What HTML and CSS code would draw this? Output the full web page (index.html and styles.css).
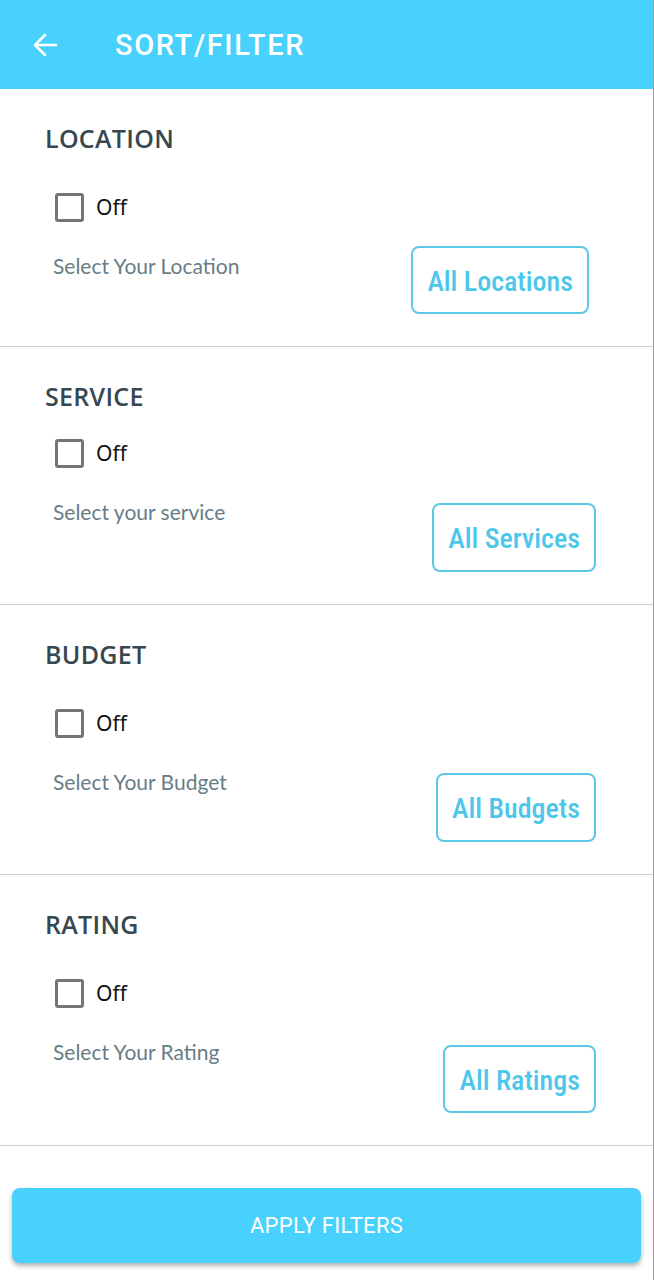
FILE: index.html
```html
<!DOCTYPE html>
<html>
<head>
<meta charset="utf-8">
<link rel="stylesheet" href="styles.css">
</head>
<body>
<div class="page">
  <header class="appbar">
    <svg class="back" width="26" height="26" viewBox="0 0 26 26"><path d="M24 13H3M13 3L3 13l10 10" fill="none" stroke="#fff" stroke-width="2.6" stroke-linecap="round" stroke-linejoin="round"/></svg>
    <h1 class="title">SORT/FILTER</h1>
  </header>

  <section class="filter filter--first">
    <h2 class="filter-title">LOCATION</h2>
    <label class="check"><span class="box"></span><span class="check-label">Off</span></label>
    <div class="select-row">
      <span class="select-text">Select Your Location</span>
      <button class="pick">All Locations</button>
    </div>
  </section>

  <section class="filter filter--tight">
    <h2 class="filter-title">SERVICE</h2>
    <label class="check"><span class="box"></span><span class="check-label">Off</span></label>
    <div class="select-row">
      <span class="select-text">Select your service</span>
      <button class="pick">All Services</button>
    </div>
  </section>

  <section class="filter">
    <h2 class="filter-title">BUDGET</h2>
    <label class="check"><span class="box"></span><span class="check-label">Off</span></label>
    <div class="select-row">
      <span class="select-text">Select Your Budget</span>
      <button class="pick">All Budgets</button>
    </div>
  </section>

  <section class="filter filter--last">
    <h2 class="filter-title">RATING</h2>
    <label class="check"><span class="box"></span><span class="check-label">Off</span></label>
    <div class="select-row">
      <span class="select-text">Select Your Rating</span>
      <button class="pick">All Ratings</button>
    </div>
  </section>

  <div class="apply-wrap">
    <button class="apply">APPLY FILTERS</button>
  </div>
</div>
</body>
</html>
```
FILE: styles.css
```css
* { box-sizing: border-box; }
html, body { margin: 0; padding: 0; background: #fff; }
.page {
  width: 654px;
  height: 1280px;
  border-right: 1px solid #9a9a9a;
  display: flex;
  flex-direction: column;
}
.appbar {
  height: 89px;
  background: #48d1fd;
  display: flex;
  align-items: center;
  padding-left: 32px;
}
.back { display: block; margin-right: 57px; }
.title {
  margin: 0;
  font-family: Roboto, "Liberation Sans", sans-serif;
  font-weight: 500;
  font-size: 29px;
  color: #fff;
  letter-spacing: 1.6px;
}
.filter {
  border-bottom: 1px solid #cfcfcf;
  padding: 34px 57px 32px 45px;
  display: flex;
  flex-direction: column;
}
.filter-title {
  margin: 0 0 39px 0;
  height: 30px;
  line-height: 30px;
  font-family: "Open Sans", "Noto Sans", sans-serif;
  font-weight: 600;
  font-size: 25px;
  letter-spacing: 0.3px;
  color: #36474f;
}
.filter--tight .filter-title { margin-bottom: 27px; }
.check {
  display: flex;
  align-items: center;
  height: 30px;
  padding-left: 10px;
  margin-bottom: 32px;
}
.box {
  width: 29px;
  height: 29px;
  border: 3px solid #757575;
  border-radius: 3px;
  margin-right: 12px;
}
.check-label {
  font-family: "Noto Sans", "Open Sans", sans-serif;
  font-size: 21px;
  color: #111;
}
.select-row {
  display: flex;
  justify-content: space-between;
  align-items: flex-start;
  padding-left: 8px;
}
.select-text {
  font-family: Lato, "Open Sans", sans-serif;
  font-size: 21px;
  line-height: 24px;
  color: #687d86;
}
.pick {
  margin-top: 3px;
  height: 69px;
  padding: 2px 14px 0 14px;
  background: #fff;
  border: 2px solid #5bc9e6;
  border-radius: 8px;
  font-family: "Roboto Condensed", "Liberation Sans Narrow", Roboto, sans-serif;
  font-weight: 500;
  font-size: 28px;
  color: #4cc7ea;
}
.filter--first { padding-right: 64px; }
.filter--first .check { margin-bottom: 24px; }
.filter--first .select-text { margin-top: 8px; }
.filter--first .pick { margin-top: 0; height: 68px; }
.filter--last .pick { margin-top: 5px; height: 68px; }
.apply-wrap {
  padding: 42px 12px 0 12px;
}
.apply {
  width: 100%;
  height: 75px;
  background: #48d1fd;
  border: none;
  border-radius: 8px;
  box-shadow: 0 3px 5px rgba(0,0,0,0.3);
  font-family: Roboto, "Liberation Sans", sans-serif;
  font-weight: 400;
  font-size: 22px;
  letter-spacing: 0.3px;
  color: #fff;
}
```
